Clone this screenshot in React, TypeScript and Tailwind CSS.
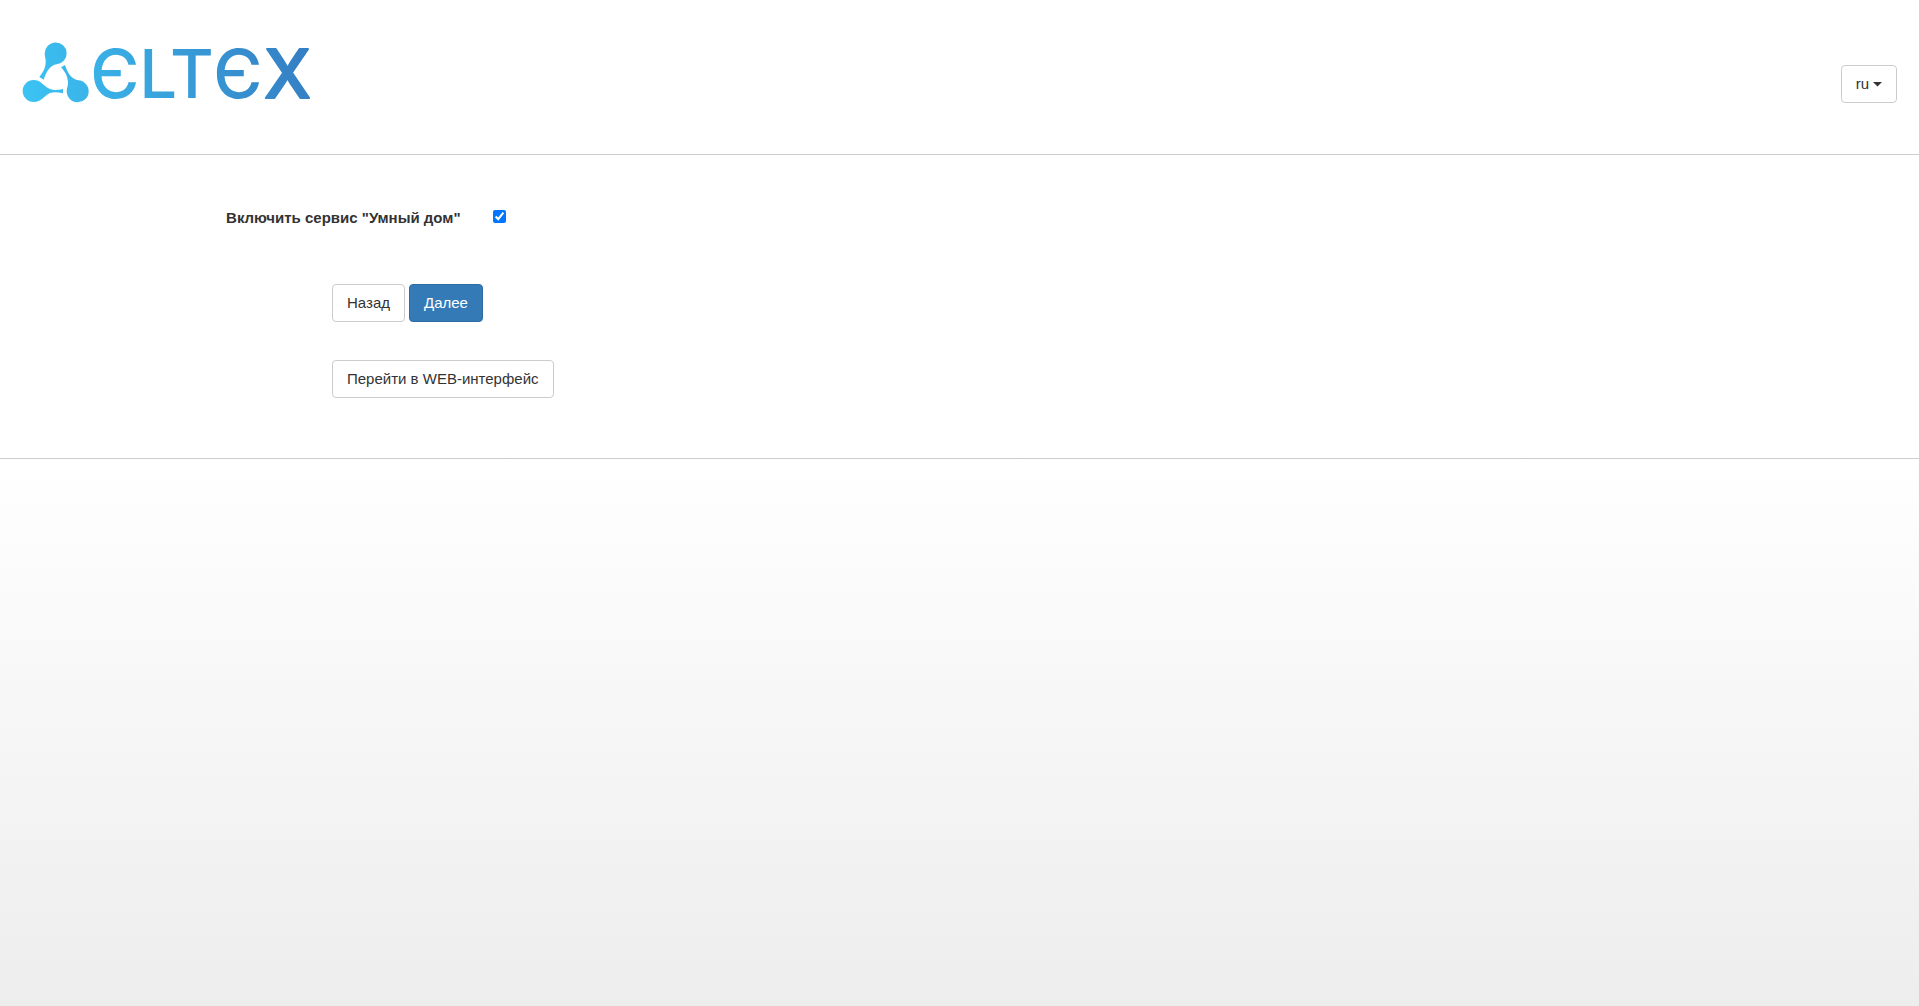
import { useState } from "react";

function Logo() {
  return (
    <svg
      viewBox="36 33 867 189"
      role="img"
      aria-label="ELTEX"
      className="block h-[63px] w-[289px] overflow-visible"
    >
      <defs>
        <linearGradient id="brand" gradientUnits="userSpaceOnUse" x1="40" y1="220" x2="860" y2="20">
          <stop offset="0" stopColor="#3bc4f4" />
          <stop offset="1" stopColor="#357fc4" />
        </linearGradient>
      </defs>
      <g fill="url(#brand)">
        <path d="M104 70A33 33 0 1 1 140 103C122 106 111 120 101 149L88 141C97 129 107 116 107 96C107 84 104 80 104 70Z" />
        <path d="M71 216A33 33 0 1 1 71 150C95 150 98 168 120 177C130 181 145 180 159 177V190C145 186 130 185 120 189C100 198 95 216 71 216Z" />
        <path d="M170 184A33 33 0 1 0 205 151C185 147 173 131 165 105L153 112C167 127 173 140 174 158C174 170 170 174 170 184Z" />
        <text y="203" className="font-['Inter',sans-serif] text-[201px] leading-none font-medium">
          <tspan x="241">Є</tspan>
          <tspan x="388">L</tspan>
          <tspan x="480">T</tspan>
          <tspan x="610">Є</tspan>
          <tspan x="762" stroke="url(#brand)" strokeWidth="6" strokeLinejoin="round">
            X
          </tspan>
        </text>
      </g>
    </svg>
  );
}

const button = "rounded border px-[14px] py-[7px] text-[15px] leading-[22px]";
const plain = "border-[#ccc] bg-white text-[#333] hover:bg-[#e6e6e6]";

export default function App() {
  const [enabled, setEnabled] = useState(true);

  return (
    <div className="flex min-h-screen flex-col bg-white font-['Liberation_Sans',Arial,sans-serif] text-[15px] leading-[22px] text-[#333]">
      <header className="flex items-start justify-between border-b border-[#ccc] px-[22px] pt-[41px] pb-[50px]">
        <a href="#">
          <Logo />
        </a>
        <button
          type="button"
          aria-haspopup="menu"
          className={`${button} ${plain} mt-6 flex items-center gap-1`}
        >
          ru
          <svg viewBox="0 0 9 5" className="h-[5px] w-[9px]" fill="currentColor" aria-hidden="true">
            <path d="M0 0h9L4.5 4.5z" />
          </svg>
        </button>
      </header>

      <main className="border-b border-[#ccc] pt-[52px] pb-[60px]">
        <form onSubmit={(e) => e.preventDefault()}>
          <div className="flex items-start">
            <label htmlFor="smart-home" className="w-6/25 text-right font-bold">
              Включить сервис "Умный дом"
            </label>
            <input
              id="smart-home"
              type="checkbox"
              checked={enabled}
              onChange={(e) => setEnabled(e.target.checked)}
              className="mt-[3px] ml-8 size-[13px]"
            />
          </div>

          <div className="ml-[332px] flex flex-col items-start gap-[38px] pt-[55px]">
            <div className="flex gap-1">
              <button type="button" className={`${button} ${plain}`}>
                Назад
              </button>
              <button
                type="submit"
                className={`${button} border-[#2e6da4] bg-[#337ab7] text-white hover:bg-[#286090]`}
              >
                Далее
              </button>
            </div>
            <button type="button" className={`${button} ${plain}`}>
              Перейти в WEB-интерфейс
            </button>
          </div>
        </form>
      </main>

      <footer className="flex-1 bg-linear-to-b from-white to-[#ededed]" />
    </div>
  );
}
